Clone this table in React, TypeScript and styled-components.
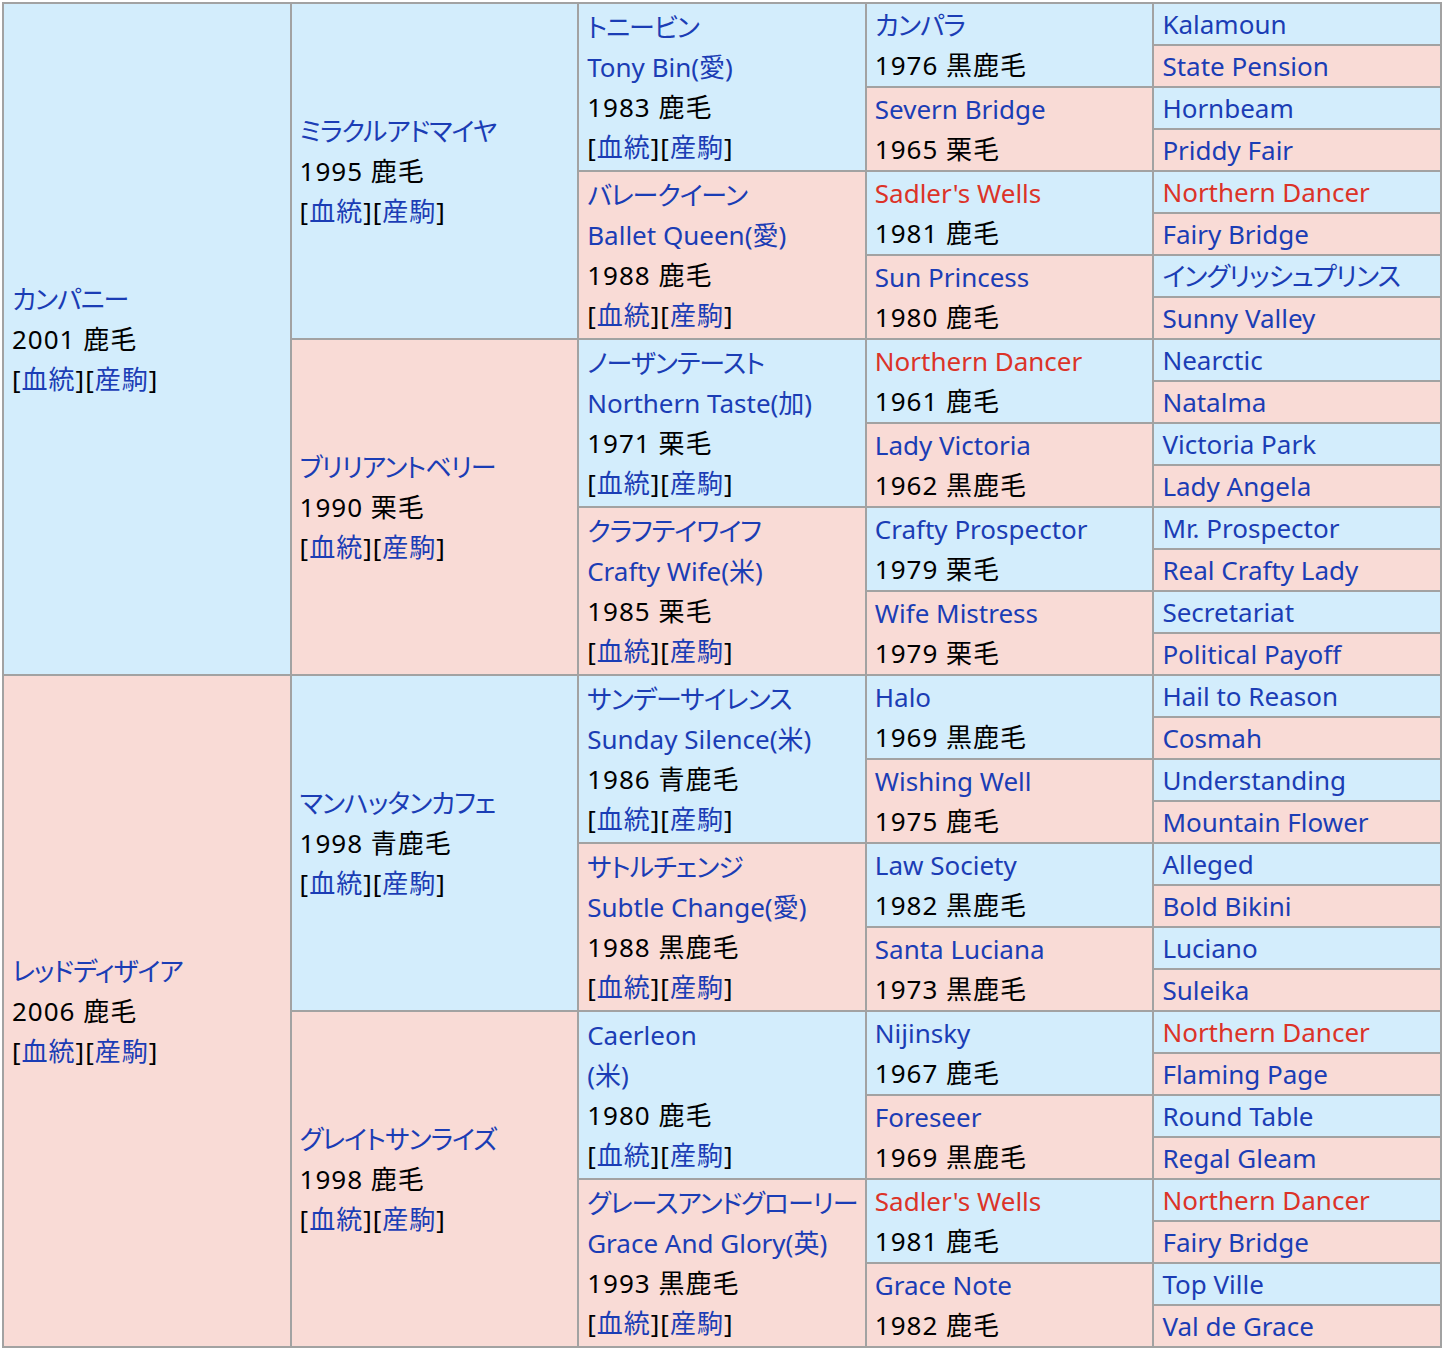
import React from 'react';
import styled, { createGlobalStyle } from 'styled-components';

const GlobalStyle = createGlobalStyle`
  html, body { margin: 0; padding: 0; background: #ffffff; }
  body {
    font-family: "Noto Sans", "Noto Sans CJK JP", sans-serif;
    font-feature-settings: "palt";
  }
`;

const Page = styled.div`
  padding: 2px 0 0 2px;
`;

const Pedigree = styled.div`
  display: grid;
  box-sizing: border-box;
  width: 1440px;
  grid-template-columns: repeat(5, 1fr);
  grid-template-rows: repeat(32, 40px);
  gap: 2px;
  padding: 2px;
  background: #a2a2a2;
`;

const Cell = styled.div<{ $col: number; $row: number; $span: number; $dam: boolean }>`
  grid-column: ${(p) => p.$col};
  grid-row: ${(p) => p.$row} / span ${(p) => p.$span};
  background: ${(p) => (p.$dam ? '#f9dbd6' : '#d3edfc')};
  display: flex;
  flex-direction: column;
  justify-content: center;
  padding: 0 8px;
  min-width: 0;
  overflow: hidden;
  font-size: 26px;
  line-height: 40px;
  color: #000000;
  white-space: nowrap;
`;

const NameLine = styled.div<{ $jp: boolean }>`
  letter-spacing: ${(p) => (p.$jp ? '-1px' : '0')};
`;

const InfoLine = styled.div`
  letter-spacing: 1px;
`;

const Link = styled.a<{ $red?: boolean }>`
  color: ${(p) => (p.$red ? '#dc3328' : '#1b3db5')};
  text-decoration: none;
`;

type Horse = {
  names: string[];
  red?: boolean;
  year?: string;
  links?: boolean;
};

const gen1: Horse[] = [
  { names: ['カンパニー'], year: '2001 鹿毛', links: true },
  { names: ['レッドディザイア'], year: '2006 鹿毛', links: true },
];

const gen2: Horse[] = [
  { names: ['ミラクルアドマイヤ'], year: '1995 鹿毛', links: true },
  { names: ['ブリリアントベリー'], year: '1990 栗毛', links: true },
  { names: ['マンハッタンカフェ'], year: '1998 青鹿毛', links: true },
  { names: ['グレイトサンライズ'], year: '1998 鹿毛', links: true },
];

const gen3: Horse[] = [
  { names: ['トニービン', 'Tony Bin(愛)'], year: '1983 鹿毛', links: true },
  { names: ['バレークイーン', 'Ballet Queen(愛)'], year: '1988 鹿毛', links: true },
  { names: ['ノーザンテースト', 'Northern Taste(加)'], year: '1971 栗毛', links: true },
  { names: ['クラフテイワイフ', 'Crafty Wife(米)'], year: '1985 栗毛', links: true },
  { names: ['サンデーサイレンス', 'Sunday Silence(米)'], year: '1986 青鹿毛', links: true },
  { names: ['サトルチェンジ', 'Subtle Change(愛)'], year: '1988 黒鹿毛', links: true },
  { names: ['Caerleon', '(米)'], year: '1980 鹿毛', links: true },
  { names: ['グレースアンドグローリー', 'Grace And Glory(英)'], year: '1993 黒鹿毛', links: true },
];

const gen4: Horse[] = [
  { names: ['カンパラ'], year: '1976 黒鹿毛' },
  { names: ['Severn Bridge'], year: '1965 栗毛' },
  { names: ["Sadler's Wells"], red: true, year: '1981 鹿毛' },
  { names: ['Sun Princess'], year: '1980 鹿毛' },
  { names: ['Northern Dancer'], red: true, year: '1961 鹿毛' },
  { names: ['Lady Victoria'], year: '1962 黒鹿毛' },
  { names: ['Crafty Prospector'], year: '1979 栗毛' },
  { names: ['Wife Mistress'], year: '1979 栗毛' },
  { names: ['Halo'], year: '1969 黒鹿毛' },
  { names: ['Wishing Well'], year: '1975 鹿毛' },
  { names: ['Law Society'], year: '1982 黒鹿毛' },
  { names: ['Santa Luciana'], year: '1973 黒鹿毛' },
  { names: ['Nijinsky'], year: '1967 鹿毛' },
  { names: ['Foreseer'], year: '1969 黒鹿毛' },
  { names: ["Sadler's Wells"], red: true, year: '1981 鹿毛' },
  { names: ['Grace Note'], year: '1982 鹿毛' },
];

const gen5: Horse[] = [
  { names: ['Kalamoun'] },
  { names: ['State Pension'] },
  { names: ['Hornbeam'] },
  { names: ['Priddy Fair'] },
  { names: ['Northern Dancer'], red: true },
  { names: ['Fairy Bridge'] },
  { names: ['イングリッシュプリンス'] },
  { names: ['Sunny Valley'] },
  { names: ['Nearctic'] },
  { names: ['Natalma'] },
  { names: ['Victoria Park'] },
  { names: ['Lady Angela'] },
  { names: ['Mr. Prospector'] },
  { names: ['Real Crafty Lady'] },
  { names: ['Secretariat'] },
  { names: ['Political Payoff'] },
  { names: ['Hail to Reason'] },
  { names: ['Cosmah'] },
  { names: ['Understanding'] },
  { names: ['Mountain Flower'] },
  { names: ['Alleged'] },
  { names: ['Bold Bikini'] },
  { names: ['Luciano'] },
  { names: ['Suleika'] },
  { names: ['Northern Dancer'], red: true },
  { names: ['Flaming Page'] },
  { names: ['Round Table'] },
  { names: ['Regal Gleam'] },
  { names: ['Northern Dancer'], red: true },
  { names: ['Fairy Bridge'] },
  { names: ['Top Ville'] },
  { names: ['Val de Grace'] },
];

const generations = [gen1, gen2, gen3, gen4, gen5];

const isKana = (s: string) => /[\u30A0-\u30FF]/.test(s);

function HorseCell({ horse, col, index }: { horse: Horse; col: number; index: number }) {
  const span = 16 / Math.pow(2, col - 1);
  return (
    <Cell $col={col} $row={index * span + 1} $span={span} $dam={index % 2 === 1}>
      {horse.names.map((n, i) => (
        <NameLine key={i} $jp={isKana(n)}>
          <Link href="#" $red={horse.red}>
            {n}
          </Link>
        </NameLine>
      ))}
      {horse.year && <InfoLine>{horse.year}</InfoLine>}
      {horse.links && (
        <InfoLine>
          [<Link href="#">血統</Link>][<Link href="#">産駒</Link>]
        </InfoLine>
      )}
    </Cell>
  );
}

export default function App() {
  return (
    <>
      <GlobalStyle />
      <Page>
        <Pedigree>
          {generations.map((gen, g) =>
            gen.map((horse, i) => (
              <HorseCell key={`${g}-${i}`} horse={horse} col={g + 1} index={i} />
            ))
          )}
        </Pedigree>
      </Page>
    </>
  );
}
